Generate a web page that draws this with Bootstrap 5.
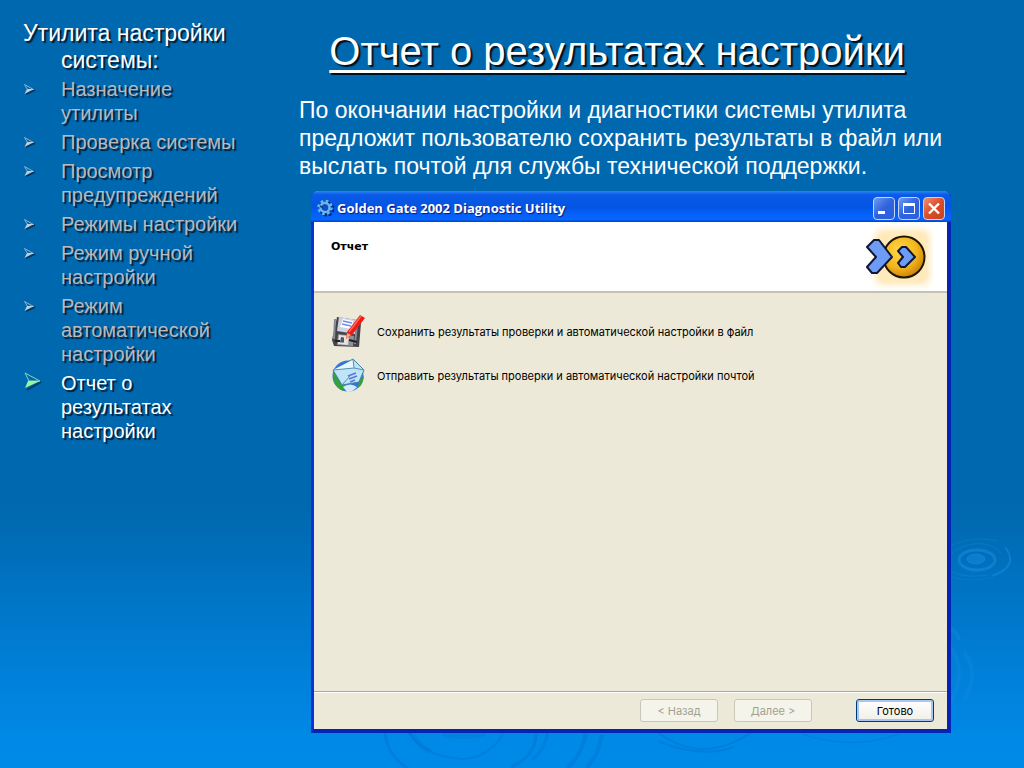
<!DOCTYPE html>
<html lang="ru">
<head>
<meta charset="utf-8">
<meta name="viewport" content="width=device-width, initial-scale=1">
<title>Отчет о результатах настройки</title>
<link href="https://cdn.jsdelivr.net/npm/bootstrap@5.3.0/dist/css/bootstrap.min.css" rel="stylesheet">
<style>
body{font-family:"Liberation Sans",Arial,sans-serif;color:#fff;background:#0068ae}
.slide{position:relative;overflow:hidden;background:linear-gradient(#0068ae 0,#0068ae 66%,#007cd2 84%,#008ae8 97%)}
.ripples{position:absolute;right:0;bottom:0;width:664px;height:248px;pointer-events:none}
.slide-row{position:relative}
.outline{padding:20px 14px 20px 23px}
.outline-title{font-size:23px;line-height:27px;padding-left:38px;text-indent:-38px;margin-bottom:3px;text-shadow:2px 2px 1px #011c33}
.outline-list{font-size:20px;line-height:24px;color:#b7b9bd;text-shadow:2px 2px 1px #021d36;gap:5px}
.outline-list li{display:flex}
.marker{flex:0 0 38px;height:24px}
.current{color:#fff}
.content{padding:26px 73px 35px 43px}
.slide-title{font-size:40px;line-height:50px;margin:0 16px 20px 0;text-align:center;text-decoration:underline;text-decoration-thickness:3px;text-underline-offset:5px;text-decoration-skip-ink:none;text-shadow:2px 2px 1px #00111f}
.intro{font-size:23px;line-height:28px;margin-bottom:11px}
.xp-window{margin-left:12px;background:#ece9d8;border:solid #0831d9;border-width:0 4px 4px 3px;border-right-color:#0524b4;border-bottom-color:#0524b4;border-radius:7px 7px 0 0;font-family:Inter,sans-serif;font-size:11px;line-height:16px;color:#000}
.xp-bar{height:31px;margin:0 -4px 0 -3px;padding:3px 6px 0 6px;gap:3px;border-radius:7px 7px 0 0;background:linear-gradient(#2a86f5 0,#0b5ae8 12%,#0355e2 50%,#0562fb 80%,#0566ff 92%,#0040c8)}
.xp-name{font-family:"Open Sans",sans-serif;font-weight:700;font-size:13px;color:#fff;text-shadow:1px 1px 1px #0a1883}
.xp-ctl{width:22px;height:23px;padding:0;border:1px solid #c4d4fb;border-radius:4px;background:linear-gradient(135deg,#6d9bf5,#2f62dd 50%,#2a5fe0)}
.xp-ctl svg{display:block;width:20px;height:21px}
.xp-close{background:linear-gradient(135deg,#ee9078,#dd4c27 50%,#c8421f)}
.xp-head{background:#fff;height:71px;padding:0 14px 0 17px;border-bottom:2px solid #c5c2b4}
.xp-head h2{font-family:"DejaVu Sans",sans-serif;font-size:11px;line-height:16px;font-weight:700;margin:17px 0 0}
.logo{width:68px;height:68px}
.xp-body{padding:21px 17px;gap:9px}
.choice{background:none;border:0;padding:0;color:#000;gap:11px}
.choice svg{width:35px;height:35px}
.xp-foot{border-top:1px solid #aca899;box-shadow:inset 0 1px #fff;padding:7px 13px 7px 12px;gap:16px}
.xp-btn{width:78px;height:23px;padding:0;border:1px solid #c9c7ba;border-radius:3px;background:#f5f4ea;color:#a1a192}
.xp-main{margin-left:28px;border:1px solid #003c74;background:linear-gradient(#fff,#f0efe8);box-shadow:inset 0 0 0 2px #a9c5f3;color:#000}
</style>
</head>
<body>
<div class="slide min-vh-100 d-flex flex-column">
<svg class="ripples" viewBox="0 0 664 248" fill="none" aria-hidden="true">
<g stroke="#168ce0" stroke-opacity=".55"><ellipse cx="616" cy="39" rx="9" ry="5" fill="#148be0" fill-opacity=".5"/><ellipse cx="617" cy="40" rx="18" ry="10" stroke-width="3"/><path d="M590 36C602 20 634 20 641 34M585 47C592 55 610 58 628 55" stroke-opacity=".4"/><path d="M645 27Q660 46 632 56" stroke-width="2"/><path d="M590 26Q612 15 638 21M590 56Q606 63 630 58" stroke-opacity=".3"/><path d="M590 108q8 5 9 12M590 126Q608 152 590 184M604 132Q620 152 604 180" stroke-width="4" stroke-opacity=".3"/></g>
<g stroke="#006fca" stroke-opacity=".4"><path d="M45 213C50 238 76 250 103 251C127 250 147 231 147 208" transform="translate(0 -12)" stroke-width="2"/><path d="M46 210Q52 229 70 240" transform="translate(0 -8)" stroke-width="5" stroke-opacity=".3"/><path d="M25 212Q27 236 48 248M176 212Q177 235 151 247M188 212Q186 228 172 240" stroke-width="3"/><path d="M226 212Q223 232 208 248M242 215Q238 237 226 248" stroke-width="4" stroke-opacity=".4"/><path d="M296 211Q343 247 393 211M298 221Q341 239 374 227" stroke-width="2"/><path d="M442 214Q493 231 539 214" stroke-opacity=".4"/><ellipse cx="104" cy="214" rx="22" ry="5" fill="#0076cf" fill-opacity=".35" stroke="none"/></g>
</svg>
<div class="row g-0 flex-grow-1 slide-row">
<aside class="col-3 outline">
<p class="outline-title">Утилита настройки системы:</p>
<ul class="outline-list list-unstyled d-flex flex-column mb-0">
<li><svg class="marker" viewBox="0 0 38 24" aria-hidden="true"><use href="#arrow"/></svg><span>Назначение утилиты</span></li>
<li><svg class="marker" viewBox="0 0 38 24" aria-hidden="true"><use href="#arrow"/></svg><span>Проверка системы</span></li>
<li><svg class="marker" viewBox="0 0 38 24" aria-hidden="true"><use href="#arrow"/></svg><span>Просмотр предупреждений</span></li>
<li><svg class="marker" viewBox="0 0 38 24" aria-hidden="true"><use href="#arrow"/></svg><span>Режимы настройки</span></li>
<li><svg class="marker" viewBox="0 0 38 24" aria-hidden="true"><use href="#arrow"/></svg><span>Режим ручной настройки</span></li>
<li><svg class="marker" viewBox="0 0 38 24" aria-hidden="true"><use href="#arrow"/></svg><span>Режим автоматической настройки</span></li>
<li class="current"><svg class="marker" viewBox="0 0 38 24" aria-hidden="true"><path d="M4 19l14-8" stroke="#023a66" stroke-width="2"/><path d="M2 2l15 8H6z" fill="#0068ae" stroke="#7fdcae"/><path d="M5 10h12L2 17z" fill="#98f5a0"/></svg><span>Отчет о результатах настройки</span></li>
</ul>
</aside>
<main class="col-9 content d-flex flex-column">
<h1 class="slide-title fw-normal">Отчет о результатах настройки</h1>
<p class="intro">По окончании настройки и диагностики системы утилита предложит пользователю сохранить результаты в файл или выслать почтой для службы технической поддержки.</p>
<section class="xp-window flex-grow-1 d-flex flex-column">
<header class="xp-bar d-flex align-items-center">
<svg width="17" height="18" viewBox="0 0 17 18" aria-hidden="true"><circle cx="10" cy="10" r="6" fill="none" stroke="#08266e" stroke-width="3" stroke-dasharray="3 1.7"/><circle cx="8" cy="8.500" r="6.500" fill="none" stroke="#65b8ef" stroke-width="2.500" stroke-dasharray="2.600 2.500"/><circle cx="8" cy="8.500" r="4.500" fill="none" stroke="#6bb6ee" stroke-width="2.500"/><path d="M3 7l7 4" stroke="#163b84" stroke-width="1.500"/><circle cx="8" cy="9" r="2.500" fill="#0b4fc0"/></svg>
<span class="xp-name flex-grow-1">Golden Gate 2002 Diagnostic Utility</span>
<button type="button" class="xp-ctl" aria-label="Свернуть"><svg viewBox="0 0 20 21"><path d="M4 13h7v3H4z" fill="#fff"/></svg></button>
<button type="button" class="xp-ctl" aria-label="Развернуть"><svg viewBox="0 0 20 21"><path d="M4.500 5.500h11v10h-11z" fill="none" stroke="#fff"/><path d="M4 5h12v3H4z" fill="#fff"/></svg></button>
<button type="button" class="xp-ctl xp-close" aria-label="Закрыть"><svg viewBox="0 0 20 21"><path d="M5 5.500l10 10M15 5.500l-10 10" stroke="#fff" stroke-width="2.400"/></svg></button>
</header>
<div class="xp-head d-flex justify-content-between align-items-start">
<h2>Отчет</h2>
<svg class="logo" viewBox="0 0 68 68" aria-hidden="true"><defs><filter id="soft" x="-20%" y="-20%" width="140%" height="140%"><feGaussianBlur stdDeviation="3"/></filter><radialGradient id="gold" cx=".4" cy=".35" r=".7"><stop offset="0" stop-color="#ffd84c"/><stop offset=".6" stop-color="#f3b51b"/><stop offset="1" stop-color="#c67b04"/></radialGradient></defs><rect x="10" y="7" width="55" height="56" rx="8" fill="#ffe3a8" opacity=".8" filter="url(#soft)"/><circle cx="39" cy="35" r="20.500" fill="url(#gold)" stroke="#1c1606" stroke-width="2"/><path d="M2 25l7-7 5 0 13 17-15 16-5 0-5-6 9-10z" fill="#6c9cf5" stroke="#101737" stroke-width="2" stroke-linejoin="round"/><path d="M33 29l4-4h4l9 10-10 10h-4l-3-4 5-6z" fill="#6c9cf5" stroke="#101737" stroke-width="2" stroke-linejoin="round"/></svg>
</div>
<div class="xp-body flex-grow-1 d-flex flex-column align-items-start">
<button type="button" class="choice d-flex align-items-center"><svg viewBox="0 0 35 35" aria-hidden="true"><path d="M6 3l20 3 4 3-2 24-25-1-2-6z" fill="#44454c"/><path d="M8 3l18 3-2 14-18-3z" fill="#cfd3e1"/><path d="M12 5l10 2-1 8-12-2z" fill="#fff"/><path d="M12 7l9 2M11 10l9 2" stroke="#6f8de8" stroke-width="1.500"/><path d="M4 5l-1 20M26 10l-2 20" stroke="#898a92" stroke-width="2"/><path d="M7 20l16 2-1 10-16-1z" fill="#909198"/><path d="M8 21l10 1-1 9-10-1z" fill="#e2e2e5"/><path d="M10 23l3 .5v5H9z" fill="#55575d"/><path d="M4 27h5M18 26l8 2" stroke="#222" stroke-width="2"/><path d="M29 1l5 3-13 17-6 4 1-7z" fill="#ef1b16"/><path d="M30 2L18 18" stroke="#ff6654" stroke-width="1.500"/><path d="M16 19l4 2-5 4z" fill="#f4a778"/></svg><span>Сохранить результаты проверки и автоматической настройки в файл</span></button>
<button type="button" class="choice d-flex align-items-center"><svg viewBox="0 0 35 35" aria-hidden="true"><circle cx="17" cy="18" r="15.500" fill="#3b72d8"/><path d="M2 14l5 2 9 10-4 7Q1 28 2 14zM28 22l5-4q-1 9-6 12z" fill="#35a239"/><path d="M12 29q7-5 14 0-4 5-10 5z" fill="#d5ebfa"/><path d="M2 12L22 1l11 11-5 12-17 3z" fill="#bfe3f7" stroke="#3f83a4"/><path d="M2 12l21-2-1-8z" fill="#e6f7ff"/><path d="M2 12l21-2-1-9M23 10l10 2M11 27l8-9" fill="none" stroke="#5790ae"/><path d="M17 18l8-3M18 21l8-3M19 24l5-2" fill="none" stroke="#5679dc" stroke-width="1.500"/></svg><span>Отправить результаты проверки и автоматической настройки почтой</span></button>
</div>
<footer class="xp-foot d-flex justify-content-end">
<button type="button" class="xp-btn" disabled>&lt; Назад</button>
<button type="button" class="xp-btn" disabled>Далее &gt;</button>
<button type="button" class="xp-btn xp-main">Готово</button>
</footer>
</section>
</main>
</div>
</div>
<svg width="0" height="0" class="position-absolute" aria-hidden="true"><symbol id="arrow" viewBox="0 0 38 24"><path d="M3 17l9-4" stroke="#023a66" stroke-width="2"/><path d="M1.500 7.500l9 5h-6z" fill="#0068ae" stroke="#8fb0cc"/><path d="M4 12h7l-9.500 5z" fill="#c3ced8"/></symbol></svg>
<script src="https://cdn.jsdelivr.net/npm/bootstrap@5.3.0/dist/js/bootstrap.bundle.min.js"></script>
</body>
</html>
